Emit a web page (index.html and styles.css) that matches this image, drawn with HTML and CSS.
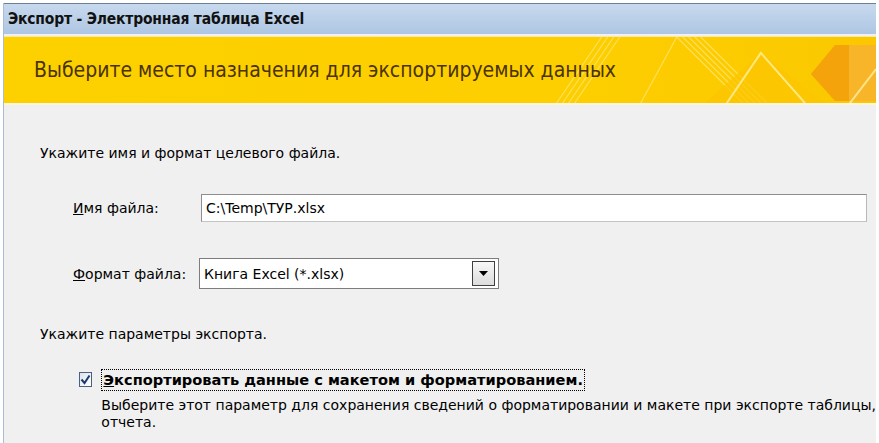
FILE: index.html
```html
<!doctype html>
<html lang="ru">
<head>
  <meta charset="utf-8">
  <title>Экспорт - Электронная таблица Excel</title>
  <link rel="stylesheet" href="styles.css">
</head>
<body>
  <div class="window">
    <div class="titlebar">Экспорт - Электронная таблица Excel</div>
    <div class="banner">
      <svg class="banner-art" viewBox="0 0 871 66" preserveAspectRatio="none">
        <g stroke="#fff3b0" stroke-width="1.2" opacity="0.5">
          <line x1="552" y1="66" x2="597" y2="0"/>
          <line x1="558" y1="66" x2="603" y2="0"/>
          <line x1="564" y1="66" x2="609" y2="0"/>
          <line x1="570" y1="66" x2="615" y2="0"/>
          <line x1="636" y1="66" x2="672" y2="0"/>
          <line x1="672" y1="0" x2="738" y2="66"/>
          <line x1="678" y1="0" x2="744" y2="66"/>
          <line x1="684" y1="0" x2="750" y2="66"/>
          <line x1="690" y1="0" x2="756" y2="66"/>
          <line x1="696" y1="0" x2="762" y2="66"/>
        </g>
        <polygon points="700,66 756,16 820,66" fill="#fcc400" opacity="0.7"/>
        <g stroke="#fff0a0" stroke-width="2" opacity="0.8" fill="none">
          <polyline points="722,66 756,16 800,66"/>
        </g>
        <polygon points="806,37 830,8 844,8 844,64 830,64" fill="#f5a30a"/>
        <rect x="844" y="8" width="27" height="56" fill="#f8b52a"/>
        <line x1="842" y1="70" x2="871" y2="32" stroke="#fff0a0" stroke-width="2" opacity="0.8"/>
      </svg>
      <h1 class="banner-title">Выберите место назначения для экспортируемых данных</h1>
    </div>
    <div class="content">
      <p class="section">Укажите имя и формат целевого файла.</p>
      <div class="field">
        <label class="field-label"><u>И</u>мя файла:</label>
        <div class="textbox">C:\Temp\ТУР.xlsx</div>
      </div>
      <div class="field field-format">
        <label class="field-label"><u>Ф</u>ормат файла:</label>
        <div class="combo">
          <span class="combo-text">Книга Excel (*.xlsx)</span>
          <span class="combo-button">
            <svg width="9" height="5" viewBox="0 0 9 5"><polygon points="0,0 9,0 4.5,5" fill="#000"/></svg>
          </span>
        </div>
      </div>
      <p class="section section-options">Укажите параметры экспорта.</p>
      <div class="option">
        <span class="checkbox">
          <svg width="11" height="11" viewBox="0 0 11 11"><polyline points="1.5,5.5 4.5,9 9.5,1.5" fill="none" stroke="#1d3a6e" stroke-width="2"/></svg>
        </span>
        <div class="option-body">
          <span class="option-label"><u>Э</u>кспортировать данные с макетом и форматированием.</span>
          <p class="option-desc">Выберите этот параметр для сохранения сведений о форматировании и макете при экспорте таблицы,<br>отчета.</p>
        </div>
      </div>
    </div>
  </div>
</body>
</html>
```

FILE: styles.css
```css
body {
  margin: 0;
  background: #fff;
  font-family: "DejaVu Sans", sans-serif;
  color: #000;
  overflow: hidden;
}

.window {
  width: 872px;
  height: 440px;
  margin: 3px 0 0 3px;
  border-left: 1px solid #a9bdd6;
  background: #f0f0f0;
  overflow: hidden;
}

.titlebar {
  height: 30px;
  border-top: 1px solid #6f7f94;
  background: linear-gradient(#c7d9ee, #aec6e3);
  font-family: "DejaVu Sans Condensed", "DejaVu Sans", sans-serif;
  font-size: 15.5px;
  font-weight: bold;
  line-height: 30px;
  padding-left: 4px;
  color: #111;
  letter-spacing: -0.2px;
}

.banner {
  position: relative;
  height: 66px;
  margin-top: 2px;
  border-top: 1px solid #fbeaa0;
  border-bottom: 2px solid #fdf6dc;
  background: linear-gradient(90deg, #fdd000, #fdcf00 60%, #fbc800);
  display: flex;
  align-items: center;
  overflow: hidden;
}

.banner-art {
  position: absolute;
  left: 0;
  top: 0;
  width: 100%;
  height: 100%;
}

.banner-title {
  position: relative;
  margin: 0 0 0 30px;
  font-family: "DejaVu Sans Condensed", "DejaVu Sans", sans-serif;
  font-size: 21px;
  font-weight: normal;
  color: #4a3300;
}

.content {
  padding: 38px 0 0 36px;
  font-size: 14px;
}

.section {
  margin: 0;
  height: 20px;
  line-height: 20px;
}

.field {
  display: flex;
  align-items: center;
  margin-top: 31px;
  padding-left: 33px;
}

.field-format {
  margin-top: 36px;
}

.field-label {
  width: 128px;
}

.textbox {
  width: 660px;
  height: 26px;
  line-height: 26px;
  padding-left: 4px;
  background: #fff;
  border: 1px solid #8e8e8e;
  border-right-color: #b8b8b8;
  border-bottom-color: #c4c4c4;
}

.combo {
  display: flex;
  align-items: center;
  justify-content: space-between;
  width: 291px;
  height: 29px;
  padding: 0 3px 0 4px;
  background: #fff;
  border: 1px solid #7d7d7d;
  margin-left: -2px;
}

.combo-button {
  width: 21px;
  height: 23px;
  border: 1px solid #404040;
  background: linear-gradient(#f8f8f8, #dcdcdc);
  display: flex;
  align-items: center;
  justify-content: center;
}

.section-options {
  margin-top: 35px;
}

.option {
  display: flex;
  align-items: flex-start;
  margin-top: 25px;
  padding-left: 39px;
}

.checkbox {
  width: 13px;
  height: 13px;
  margin-top: 3px;
  border: 1px solid #4a6080;
  background: linear-gradient(135deg, #dce3ec, #ffffff);
  display: flex;
  align-items: center;
  justify-content: center;
}

.option-body {
  margin-left: 9px;
}

.option-label {
  display: inline-block;
  font-weight: bold;
  font-size: 14.6px;
  padding: 1px;
  border: 1px dotted #000;
  line-height: 18px;
}

.option-desc {
  margin: 6px 0 0;
  line-height: 17px;
  white-space: nowrap;
}
```
